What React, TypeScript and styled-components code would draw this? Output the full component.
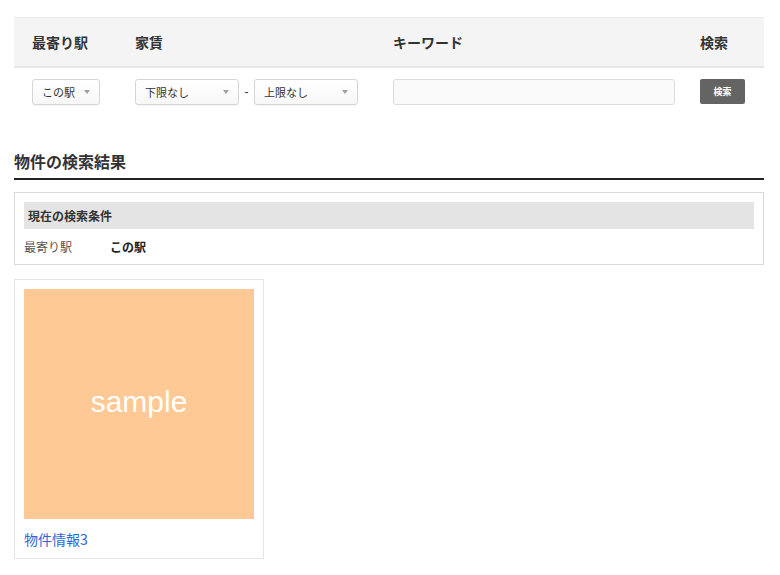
import React from "react";
import styled, { createGlobalStyle } from "styled-components";

const Global = createGlobalStyle`
  html, body { margin: 0; padding: 0; background: #fff; }
  body {
    font-family: "Liberation Sans", "Noto Sans CJK JP", sans-serif;
    color: #333;
  }
  * { box-sizing: border-box; }
`;

const Page = styled.div`
  padding: 17px 16px 0 14px;
  width: 780px;
`;

const SearchTable = styled.table`
  width: 750px;
  border-collapse: collapse;
  table-layout: fixed;
`;

const HeadCell = styled.th<{ $w: number }>`
  width: ${(p) => p.$w}px;
  background: #f4f4f4;
  border-top: 1px solid #ebebeb;
  border-bottom: 2px solid #e6e6e6;
  height: 49px;
  padding: 0 0 0 18px;
  text-align: left;
  font-family: "Noto Sans CJK JP", sans-serif;
  font-size: 14px;
  font-weight: 700;
  color: #333;
`;

const BodyCell = styled.td`
  padding: 11px 0 0 18px;
  vertical-align: top;
`;

const Inline = styled.div`
  display: flex;
  align-items: center;
`;

const SelectBox = styled.div<{ $w: number }>`
  width: ${(p) => p.$w}px;
  height: 26px;
  border: 1px solid #d6d6d6;
  border-radius: 3px;
  background: linear-gradient(#ffffff, #f7f7f7);
  box-shadow: 0 1px 1px rgba(0, 0, 0, 0.04);
  display: flex;
  align-items: center;
  justify-content: space-between;
  padding: 0 9px 0 9px;
  font-family: "Noto Sans CJK JP", sans-serif;
  font-size: 11px;
  color: #333;
`;

const Caret = styled.span`
  width: 0;
  height: 0;
  border-left: 3.5px solid transparent;
  border-right: 3.5px solid transparent;
  border-top: 4px solid #a0a0a0;
  margin-top: 1px;
`;

const Dash = styled.span`
  width: 15px;
  text-align: center;
  font-size: 12px;
  color: #333;
  font-family: "Liberation Sans", sans-serif;
`;

const Keyword = styled.input`
  width: 282px;
  height: 26px;
  border: 1px solid #dcdcdc;
  border-radius: 3px;
  background: #fafafa;
  padding: 0 8px;
  outline: none;
`;

const SearchButton = styled.button`
  width: 45px;
  height: 25px;
  border: none;
  border-radius: 2px;
  background: #646464;
  color: #fff;
  font-family: "Noto Sans CJK JP", sans-serif;
  font-size: 9px;
  font-weight: 700;
  padding: 0;
  cursor: pointer;
`;

const Title = styled.h2`
  margin: 45px 0 0;
  padding: 0 0 6px;
  border-bottom: 2px solid #222;
  font-family: "Noto Sans CJK JP", sans-serif;
  font-size: 16px;
  font-weight: 700;
  line-height: 22px;
  color: #333;
  width: 750px;
`;

const ConditionBox = styled.div`
  margin-top: 12px;
  width: 750px;
  border: 1px solid #dadada;
  padding: 9px 9px 0;
`;

const ConditionHead = styled.div`
  background: #e4e4e4;
  height: 27px;
  display: flex;
  align-items: center;
  padding-left: 4px;
  font-family: "Noto Sans CJK JP", sans-serif;
  font-size: 12px;
  font-weight: 700;
  color: #333;
`;

const ConditionRow = styled.div`
  display: flex;
  align-items: center;
  height: 35px;
  font-family: "Noto Sans CJK JP", sans-serif;
  font-size: 12px;
  padding-top: 1px;
`;

const CondLabel = styled.span`
  width: 86px;
  color: #555;
`;

const CondValue = styled.span`
  font-weight: 700;
  color: #222;
`;

const Card = styled.div`
  margin-top: 14px;
  width: 250px;
  border: 1px solid #e4e4e4;
  padding: 9px 9px 9px;
`;

const Thumb = styled.div`
  width: 230px;
  height: 230px;
  background: #fec994;
  display: flex;
  align-items: center;
  justify-content: center;
  color: #fff;
  font-family: "Liberation Sans", sans-serif;
  font-size: 30px;
  padding-bottom: 4px;
`;

const CardLink = styled.a`
  display: block;
  margin-top: 10px;
  font-family: "Noto Sans CJK JP", sans-serif;
  font-size: 14px;
  line-height: 20px;
  color: #2c68d6;
  text-decoration: none;
`;

function Select({ w, label }: { w: number; label: string }) {
  return (
    <SelectBox $w={w}>
      <span>{label}</span>
      <Caret />
    </SelectBox>
  );
}

export default function App() {
  return (
    <>
      <Global />
      <Page>
        <SearchTable>
          <thead>
            <tr>
              <HeadCell $w={103}>最寄り駅</HeadCell>
              <HeadCell $w={258}>家賃</HeadCell>
              <HeadCell $w={307}>キーワード</HeadCell>
              <HeadCell $w={82}>検索</HeadCell>
            </tr>
          </thead>
          <tbody>
            <tr>
              <BodyCell>
                <Select w={68} label="この駅" />
              </BodyCell>
              <BodyCell>
                <Inline>
                  <Select w={104} label="下限なし" />
                  <Dash>-</Dash>
                  <Select w={104} label="上限なし" />
                </Inline>
              </BodyCell>
              <BodyCell>
                <Keyword type="text" />
              </BodyCell>
              <BodyCell>
                <SearchButton>検索</SearchButton>
              </BodyCell>
            </tr>
          </tbody>
        </SearchTable>

        <Title>物件の検索結果</Title>

        <ConditionBox>
          <ConditionHead>現在の検索条件</ConditionHead>
          <ConditionRow>
            <CondLabel>最寄り駅</CondLabel>
            <CondValue>この駅</CondValue>
          </ConditionRow>
        </ConditionBox>

        <Card>
          <Thumb>sample</Thumb>
          <CardLink href="#">物件情報3</CardLink>
        </Card>
      </Page>
    </>
  );
}
